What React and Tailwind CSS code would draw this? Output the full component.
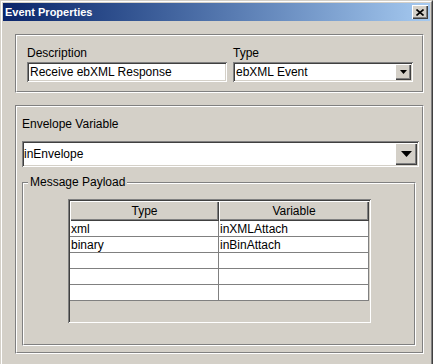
import React from "react"

const sunken = "shadow-[inset_1px_1px_#808080,inset_-1px_-1px_#ffffff,inset_2px_2px_#404040,inset_-2px_-2px_#d4d0c8]"
const raised = "shadow-[inset_1px_1px_#ffffff,inset_-1px_-1px_#404040,inset_-2px_-2px_#808080]"

const PAYLOAD = [
  { type: "xml", variable: "inXMLAttach" },
  { type: "binary", variable: "inBinAttach" },
  { type: "", variable: "" },
  { type: "", variable: "" },
  { type: "", variable: "" },
]

function Etched({ className = "", children }) {
  return (
    <div className={`border-t border-l border-[#808080] border-r border-b border-r-white border-b-white ${className}`}>
      <div className="h-full border-t border-l border-white border-r border-b border-r-[#808080] border-b-[#808080]">
        {children}
      </div>
    </div>
  )
}

function Arrow({ big }) {
  return big ? (
    <svg width="11" height="6" viewBox="0 0 11 6"><polygon points="0,0 11,0 5.5,6" fill="#000" /></svg>
  ) : (
    <svg width="7" height="4" viewBox="0 0 7 4"><polygon points="0,0 7,0 3.5,4" fill="#000" /></svg>
  )
}

export default function App() {
  return (
    <div className="w-[433px] h-[364px] overflow-hidden bg-[#d4d0c8] font-['Liberation_Sans',Arial,sans-serif] text-[12px] leading-[14px] text-black">
      <div className="h-[400px] border-t border-l border-[#d4d0c8] border-r border-r-[#404040]">
        <div className="h-full border-t border-l border-white border-r border-r-[#808080] p-px">
          {/* title bar */}
          <div className="h-[18px] flex items-center justify-between bg-linear-to-r from-[#0a246a] to-[#a6caf0]">
            <span className="pl-[2px] text-white font-bold text-[11px] leading-[13px]">Event Properties</span>
            <div className={`w-[16px] h-[14px] mr-[2px] bg-[#d4d0c8] flex items-center justify-center ${raised}`}>
              <svg width="8" height="7" viewBox="0 0 8 7">
                <path d="M0.5 0.5 L7.5 6.5 M7.5 0.5 L0.5 6.5" stroke="#000" strokeWidth="1.6" />
              </svg>
            </div>
          </div>

          <div className="ml-[12px] mr-[6px] mt-[13px] flex flex-col gap-[12px]">
            <Etched>
              <div className="pl-[10px] pt-[10px] pb-[9px] flex gap-[6px]">
                <div className="w-[200px] flex flex-col">
                  <span>Description</span>
                  <div className={`mt-[2px] h-[20px] bg-white p-[2px] pl-[3px] flex items-center ${sunken}`}>
                    Receive ebXML Response
                  </div>
                </div>
                <div className="w-[180px] flex flex-col">
                  <span>Type</span>
                  <div className={`mt-[2px] h-[20px] bg-white p-[2px] flex items-center ${sunken}`}>
                    <span className="flex-1 pl-px">ebXML Event</span>
                    <div className={`w-[16px] h-[16px] bg-[#d4d0c8] flex items-center justify-center ${raised}`}>
                      <Arrow />
                    </div>
                  </div>
                </div>
              </div>
            </Etched>

            <Etched>
              <div className="pl-[5px] pr-[3px] pt-[10px] pb-[6px] flex flex-col">
                <span>Envelope Variable</span>
                <div className={`mt-[10px] h-[26px] bg-white p-[2px] flex items-center ${sunken}`}>
                  <span className="flex-1">inEnvelope</span>
                  <div className={`w-[22px] h-[22px] bg-[#d4d0c8] flex items-center justify-center ${raised}`}>
                    <Arrow big />
                  </div>
                </div>

                <div className="relative mt-[15px] w-[394px]">
                  <Etched className="h-[164px]">
                    <div className="pt-[15px] pl-[44px]">
                      <div className={`w-[303px] h-[124px] p-[2px] bg-[#d4d0c8] ${sunken}`}>
                        <div className="flex h-[20px]">
                          <div className={`w-[149px] flex items-center justify-center ${raised}`}>Type</div>
                          <div className={`w-[150px] flex items-center justify-center ${raised}`}>Variable</div>
                        </div>
                        {PAYLOAD.map((r, i) => (
                          <div key={i} className="flex h-[16px] bg-white border-b border-[#808080]">
                            <div className="w-[149px] pl-px border-r border-[#808080] flex items-center">{r.type}</div>
                            <div className="w-[150px] pl-px border-r border-[#808080] flex items-center">{r.variable}</div>
                          </div>
                        ))}
                      </div>
                    </div>
                  </Etched>
                  <span className="absolute left-[6px] top-[-7px] px-[2px] bg-[#d4d0c8]">Message Payload</span>
                </div>
              </div>
            </Etched>
          </div>
        </div>
      </div>
    </div>
  )
}
